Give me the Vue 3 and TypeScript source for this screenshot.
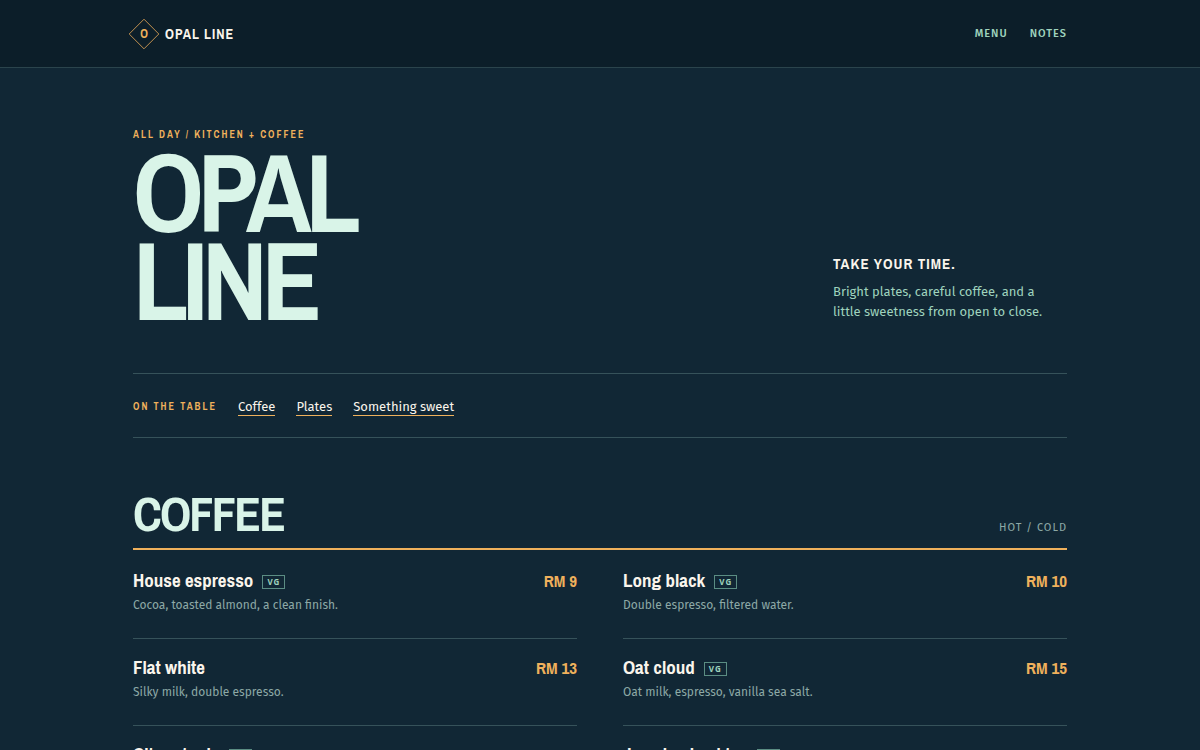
<script setup lang="ts">
interface Dish {
  name: string
  note: string
  price: number
  vegan: boolean
}

const tableLinks = [
  { label: 'Coffee', href: '#coffee' },
  { label: 'Plates', href: '#plates' },
  { label: 'Something sweet', href: '#sweet' },
]

const coffee: Dish[] = [
  { name: 'House espresso', note: 'Cocoa, toasted almond, a clean finish.', price: 9, vegan: true },
  { name: 'Long black', note: 'Double espresso, filtered water.', price: 10, vegan: true },
  { name: 'Flat white', note: 'Silky milk, double espresso.', price: 13, vegan: false },
  { name: 'Oat cloud', note: 'Oat milk, espresso, vanilla sea salt.', price: 15, vegan: true },
  { name: 'Citrus tonic', note: 'Espresso, tonic, orange peel.', price: 16, vegan: true },
  { name: 'Jasmine iced tea', note: 'Cold jasmine tea, lime, mint.', price: 12, vegan: true },
]
</script>

<template>
  <div class="page">
    <header class="topbar">
      <div class="wrap topbar-inner">
        <a class="brand" href="#top">
          <span class="mark">
            <svg viewBox="0 0 32 32" aria-hidden="true"><path d="M16 1.2 30.8 16 16 30.8 1.2 16Z" /></svg>
            <span>O</span>
          </span>
          <span>OPAL LINE</span>
        </a>
        <nav class="main-nav" aria-label="Main">
          <a href="#menu">MENU</a>
          <a href="#notes">NOTES</a>
        </nav>
      </div>
    </header>

    <main id="top" class="wrap">
      <section class="hero">
        <div>
          <p class="eyebrow">ALL DAY / KITCHEN + COFFEE</p>
          <h1>OPAL<br />LINE</h1>
        </div>
        <div class="intro">
          <h2>TAKE YOUR TIME.</h2>
          <p>Bright plates, careful coffee, and a little sweetness from open to close.</p>
        </div>
      </section>

      <nav id="menu" class="table-nav" aria-label="On the table">
        <span class="table-label">ON THE TABLE</span>
        <a v-for="link in tableLinks" :key="link.href" :href="link.href">{{ link.label }}</a>
      </nav>

      <section id="coffee" class="menu">
        <div class="menu-head">
          <h2>COFFEE</h2>
          <span>HOT / COLD</span>
        </div>
        <div class="dishes">
          <article v-for="dish in coffee" :key="dish.name" class="dish">
            <div>
              <h3>{{ dish.name }}<span v-if="dish.vegan" class="tag">VG</span></h3>
              <p>{{ dish.note }}</p>
            </div>
            <strong>RM {{ dish.price }}</strong>
          </article>
        </div>
      </section>
    </main>
  </div>
</template>

<style>
html {
  background: #112735;
}
body {
  margin: 0;
  overflow: hidden;
}
</style>

<style scoped>
.page {
  --narrow: "Archivo Narrow", "Arial Narrow", "Liberation Sans", sans-serif;
  --gold: #efb15c;
  --mint: #9fd3bd;
  --pale: #d9f4e8;
  --cream: #faf5ec;
  --line: #36525a;
  height: 100vh;
  overflow: hidden;
  background: #112735;
  color: var(--cream);
  font: 13px/20px "Fira Sans", "Trebuchet MS", "Open Sans", sans-serif;
}
h1, h2, h3, p {
  margin: 0;
}
a {
  color: inherit;
  text-decoration: none;
}
.wrap {
  box-sizing: border-box;
  max-width: 974px;
  margin: 0 auto;
  padding: 0 20px;
}
.topbar {
  background: #0c1e29;
  border-bottom: 1px solid #2b444c;
}
.topbar-inner {
  display: flex;
  align-items: center;
  justify-content: space-between;
  height: 67px;
}
.brand {
  display: flex;
  align-items: center;
  gap: 5px;
  margin-left: -5px;
  font: 700 14px/20px var(--narrow);
  letter-spacing: 1px;
}
.mark {
  display: grid;
  place-items: center;
  width: 32px;
  height: 32px;
  color: var(--gold);
  font-size: 12px;
  letter-spacing: 0;
}
.mark > * {
  grid-area: 1 / 1;
}
.mark svg {
  width: 32px;
  height: 32px;
  fill: none;
  stroke: #bf8f4f;
}
.main-nav {
  display: flex;
  gap: 22px;
  color: var(--mint);
  font-size: 11px;
  font-weight: 500;
  letter-spacing: 1px;
}
.hero {
  display: flex;
  align-items: flex-end;
  justify-content: space-between;
  padding: 58px 0 49px;
  border-bottom: 1px solid var(--line);
}
.eyebrow {
  color: var(--gold);
  font: 700 10px/18px var(--narrow);
  letter-spacing: 2px;
}
h1 {
  margin-top: 4px;
  color: var(--pale);
  font: 700 111px/88px var(--narrow);
  letter-spacing: -6px;
}
.intro {
  width: 234px;
  padding-bottom: 2px;
}
.intro h2 {
  margin-bottom: 8px;
  font: 700 15px/20px var(--narrow);
  letter-spacing: 1px;
}
.intro p {
  max-width: 222px;
  color: var(--mint);
}
.table-nav {
  display: flex;
  align-items: center;
  gap: 21px;
  height: 63px;
  border-bottom: 1px solid var(--line);
}
.table-nav a {
  padding-top: 2px;
  line-height: 17px;
  border-bottom: 1px solid var(--gold);
}
.table-label {
  padding-top: 2px;
  color: var(--gold);
  font: 700 10px/18px var(--narrow);
  letter-spacing: 2px;
}
.menu {
  padding-top: 52px;
}
.menu-head {
  display: flex;
  align-items: flex-end;
  justify-content: space-between;
  padding-bottom: 10px;
  border-bottom: 2px solid var(--gold);
}
.menu-head h2 {
  padding-bottom: 2px;
  color: var(--pale);
  font: 700 49px/46px var(--narrow);
  letter-spacing: -2px;
}
.menu-head span {
  color: #8da9a6;
  font-size: 11px;
  letter-spacing: 1px;
}
.dishes {
  display: grid;
  grid-template-columns: 1fr 1fr;
  column-gap: 46px;
  padding-top: 2px;
}
.dish {
  display: flex;
  justify-content: space-between;
  padding: 17px 0 25px;
  border-bottom: 1px solid var(--line);
}
.dish h3 {
  display: flex;
  align-items: center;
  gap: 9px;
  font: 700 19px/22px var(--narrow);
}
.dish p {
  margin-top: 6px;
  color: #8da9a6;
  font-size: 12px;
  line-height: 16px;
}
.dish strong {
  color: var(--gold);
  font: 700 17px/24px var(--narrow);
}
.tag {
  margin-top: 4px;
  padding: 0 4px;
  border: 1px solid #5b8d83;
  color: var(--mint);
  font: 700 8px/12px "Open Sans", sans-serif;
  letter-spacing: 1px;
}
</style>
